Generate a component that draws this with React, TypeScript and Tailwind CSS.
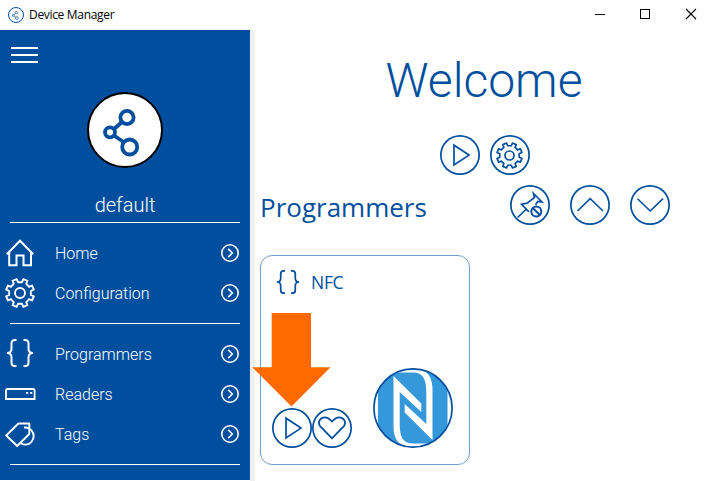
import type { ReactNode } from "react";

function gearPath(cx: number, cy: number, outer: number, inner: number) {
  const teeth = 8;
  const pts: string[] = [];
  const polar = (r: number, deg: number) => {
    const a = (deg * Math.PI) / 180;
    return `${(cx + r * Math.sin(a)).toFixed(2)} ${(cy - r * Math.cos(a)).toFixed(2)}`;
  };
  for (let i = 0; i < teeth; i++) {
    const c = 22.5 + i * 45;
    pts.push(polar(inner, c - 12), polar(outer, c - 9), polar(outer, c + 9), polar(inner, c + 12));
  }
  return `M${pts.join("L")}Z`;
}

function Gear({ className, stroke }: { className: string; stroke: number }) {
  return (
    <svg viewBox="0 0 30 30" className={className} fill="none" stroke="currentColor" strokeWidth={stroke}>
      <path d={gearPath(15, 15, 14.2, 11)} strokeLinejoin="round" />
      <circle cx="15" cy="15" r="5" />
    </svg>
  );
}

function Braces({ className, stroke }: { className: string; stroke: number }) {
  return (
    <svg viewBox="0 0 28 28" className={className} fill="none" stroke="currentColor" strokeWidth={stroke}>
      <path d="M10.5 1H9Q5.5 1 5.5 4.5V9.5Q5.5 14 1 14Q5.5 14 5.5 18.5V23.5Q5.5 27 9 27H10.5" />
      <path d="M17.5 1H19Q22.5 1 22.5 4.5V9.5Q22.5 14 27 14Q22.5 14 22.5 18.5V23.5Q22.5 27 19 27H17.5" />
    </svg>
  );
}

function Home() {
  return (
    <svg viewBox="0 0 30 30" className="ml-px size-[30px]" fill="none" stroke="currentColor" strokeWidth="2">
      <path d="M1.8 16.2 15 2.7 28.2 16.2" />
      <path d="M4.2 14V27.3H11.5V17.5H18.5V27.3H26V14" />
    </svg>
  );
}

function Reader() {
  return (
    <svg viewBox="0 0 32 30" className="h-[30px] w-8 shrink-0" fill="none" stroke="currentColor" strokeWidth="1.800">
      <path d="M2 20V11.500Q2 10 3.500 10H29Q30.600 10 30.600 11.500V20Z" />
      <path d="M22 13.800h2.200M26 13.800h2.200" />
    </svg>
  );
}

function Tags() {
  return (
    <svg viewBox="0 0 30 30" className="ml-px size-[30px]" fill="none" stroke="currentColor" strokeWidth="1.900">
      <path d="M1.200 16.500 13.400 4.500H24.300V15L12.200 27Z" strokeLinejoin="round" />
      <path d="M19 8.500H21A8.600 8.600 0 0 1 21 25.600Q18 25.600 15.800 24.200" />
    </svg>
  );
}

function Share({ className }: { className: string }) {
  return (
    <svg viewBox="0 0 76 76" className={className} fill="none" stroke="#004f9e" strokeWidth="3.800">
      <circle cx="40" cy="25.500" r="6.600" />
      <circle cx="23" cy="40.300" r="5" />
      <circle cx="42.700" cy="55" r="7.500" />
      <path d="M27 37 35 30M27 43.500 36.500 50" />
    </svg>
  );
}

function Play() {
  return (
    <svg viewBox="0 0 40 40" className="size-10" fill="none" stroke="currentColor" strokeWidth="1.700">
      <path d="M14 10.200V30L29 20.100Z" />
    </svg>
  );
}

function Round({ children }: { children: ReactNode }) {
  return (
    <button className="flex size-10 shrink-0 items-center justify-center rounded-full shadow-[inset_0_0_0_1.700px_#004f9e]">
      {children}
    </button>
  );
}

function NavRow({ icon, label }: { icon: ReactNode; label: string }) {
  return (
    <div className="flex h-10 items-center pr-[11px] pl-1">
      <div className="flex w-[51px] items-center">{icon}</div>
      <span className="flex-1 pt-0.5 text-base">{label}</span>
      <svg viewBox="0 0 18 18" className="size-[18px]" fill="none" stroke="currentColor" strokeWidth="1.600">
        <circle cx="9" cy="9" r="8.200" />
        <path d="m7.200 4.900 4.100 4.100-4.100 4.100" />
      </svg>
    </div>
  );
}

function NfcLogo() {
  return (
    <svg viewBox="0 0 80 80" className="size-20">
      <defs>
        <clipPath id="disc">
          <circle cx="40" cy="40" r="39" />
        </clipPath>
      </defs>
      <g clipPath="url(#disc)">
        <path d="M5 0H74.500V80H5Z" fill="#3498db" />
        <g fill="white">
          <path id="half" d="M20.500 8 48.300 35.500V44L26.700 24V56C26.700 69 30 75.600 40 75.600H55V80H34C24 76 20.500 69 20.500 58Z" />
          <use href="#half" transform="rotate(180 40 40)" />
        </g>
      </g>
      <circle cx="40" cy="40" r="39.100" fill="none" stroke="#004f9e" strokeWidth="1.700" />
    </svg>
  );
}

function TitleBar() {
  return (
    <header className="flex h-[30px] items-center bg-white pl-2 font-['Open_Sans','Noto_Sans',sans-serif] font-normal text-black">
      <div className="flex size-4 items-center justify-center rounded-full border border-[#004f9e]">
        <Share className="size-4" />
      </div>
      <span className="ml-[5px] flex-1 text-[12px] tracking-[-0.320px]">Device Manager</span>
      <svg viewBox="0 0 120 30" className="h-[30px] w-[120px]" fill="none" stroke="black" shapeRendering="crispEdges">
        <path d="M1 14.500h10M46.500 9.500h9v9h-9Z" />
        <path d="m92 9 10 10M102 9 92 19" shapeRendering="geometricPrecision" strokeWidth="1.100" />
      </svg>
    </header>
  );
}

function Sidebar() {
  return (
    <aside className="flex h-[450px] w-[250px] shrink-0 flex-col bg-[#004f9e] text-white">
      <div className="mt-[17px] ml-[11px] flex w-[26.500px] flex-col gap-[5px]">
        <div className="h-0.5 bg-white" />
        <div className="h-0.5 bg-white" />
        <div className="h-0.5 bg-white" />
      </div>
      <div className="mt-[29px] flex size-[76px] items-center justify-center self-center rounded-full border-2 border-black bg-white">
        <Share className="size-[76px] shrink-0" />
      </div>
      <div className="mt-[22px] h-7 text-center text-[20px] leading-[30px]">default</div>
      <div className="mx-2.5 mt-[4px] h-px bg-white" />
      <nav className="pt-2.5">
        <NavRow icon={<Home />} label="Home" />
        <NavRow icon={<Gear className="ml-px size-[30px]" stroke={1.9} />} label="Configuration" />
      </nav>
      <div className="mx-2.5 mt-2.5 h-px bg-white" />
      <nav className="pt-2.5">
        <NavRow icon={<Braces className="mb-0.5 ml-0.5 size-7" stroke={2} />} label="Programmers" />
        <NavRow icon={<Reader />} label="Readers" />
        <NavRow icon={<Tags />} label="Tags" />
      </nav>
      <div className="mx-2.5 mt-2.5 h-px bg-white" />
    </aside>
  );
}

export default function App() {
  return (
    <div className="h-[481px] w-[714px] overflow-hidden bg-white font-[Roboto,sans-serif] font-light">
      <TitleBar />
      <div className="flex">
        <Sidebar />
        <div className="h-[451px] w-[5px] shrink-0 bg-[#f0f0f0]" />
        <main className="relative flex-1 pl-[5px] text-[#004f9e]">
          <h1 className="mr-[6px] pt-[21px] text-center text-[48px] leading-[60px]">Welcome</h1>
          <div className="mt-[24px] mr-[5px] flex justify-center gap-2.5">
            <Round><Play /></Round>
            <Round><Gear className="size-[27px]" stroke={1.9} /></Round>
          </div>
          <div className="mt-2.5 flex h-10 items-center gap-5">
            <h2 className="w-[230px] pt-[5px] font-['Open_Sans','Noto_Sans',sans-serif] text-[26px] font-normal">Programmers</h2>
            <Round>
              <svg viewBox="0 0 40 40" className="size-10" fill="none" stroke="currentColor" strokeWidth="1.700">
                <path d="M7.500 32.500 16 24.500M19 26.800 11.500 19.300 17.500 18 24.500 12.500 23.500 8.500 32 17 27.800 16.500 25.500 19.800" />
                <circle cx="26.300" cy="26.500" r="5" strokeWidth="2" />
                <path d="m22.800 23 7 7" strokeWidth="2" />
              </svg>
            </Round>
            <Round>
              <svg viewBox="0 0 40 40" className="size-10" fill="none" stroke="currentColor" strokeWidth="1.600">
                <path d="M7.500 26 20.200 13.700 33 26" />
              </svg>
            </Round>
            <Round>
              <svg viewBox="0 0 40 40" className="size-10" fill="none" stroke="currentColor" strokeWidth="1.600">
                <path d="M7.500 13.700 20.200 26 33 13.700" />
              </svg>
            </Round>
          </div>
          <section className="mt-[30px] flex h-[210px] w-[210px] flex-col justify-between rounded-xl border border-[#709fcb] pt-[14px] pr-[16.500px] pb-4 pl-[11px]">
            <div className="flex h-6 items-center pl-1 font-['Open_Sans','Noto_Sans',sans-serif] text-[17.500px] font-normal">
              <Braces className="size-6" stroke={2} />
              <span className="ml-[11px] tracking-[-0.300px]">NFC</span>
            </div>
            <div className="flex items-end">
              <Round><Play /></Round>
              <Round>
                <svg viewBox="0 0 40 40" className="size-10" fill="none" stroke="currentColor" strokeWidth="1.800">
                  <path d="M20 30.300 8.800 19C4.500 14.300 8.500 9.300 12.800 9.300C16 9.300 18 11.300 20 13.500C22 11.300 24 9.300 27.200 9.300C31.500 9.300 35.500 14.300 31.200 19Z" />
                </svg>
              </Round>
              <div className="ml-auto"><NfcLogo /></div>
            </div>
          </section>
          <svg viewBox="0 0 79 94" className="absolute top-[283px] left-[-3px] h-[94px] w-[79px]">
            <path d="M19.700 0H59V54.300H78.500L39.500 93.500 .3 54.300H19.700Z" fill="#ff6a00" />
          </svg>
        </main>
      </div>
    </div>
  );
}
